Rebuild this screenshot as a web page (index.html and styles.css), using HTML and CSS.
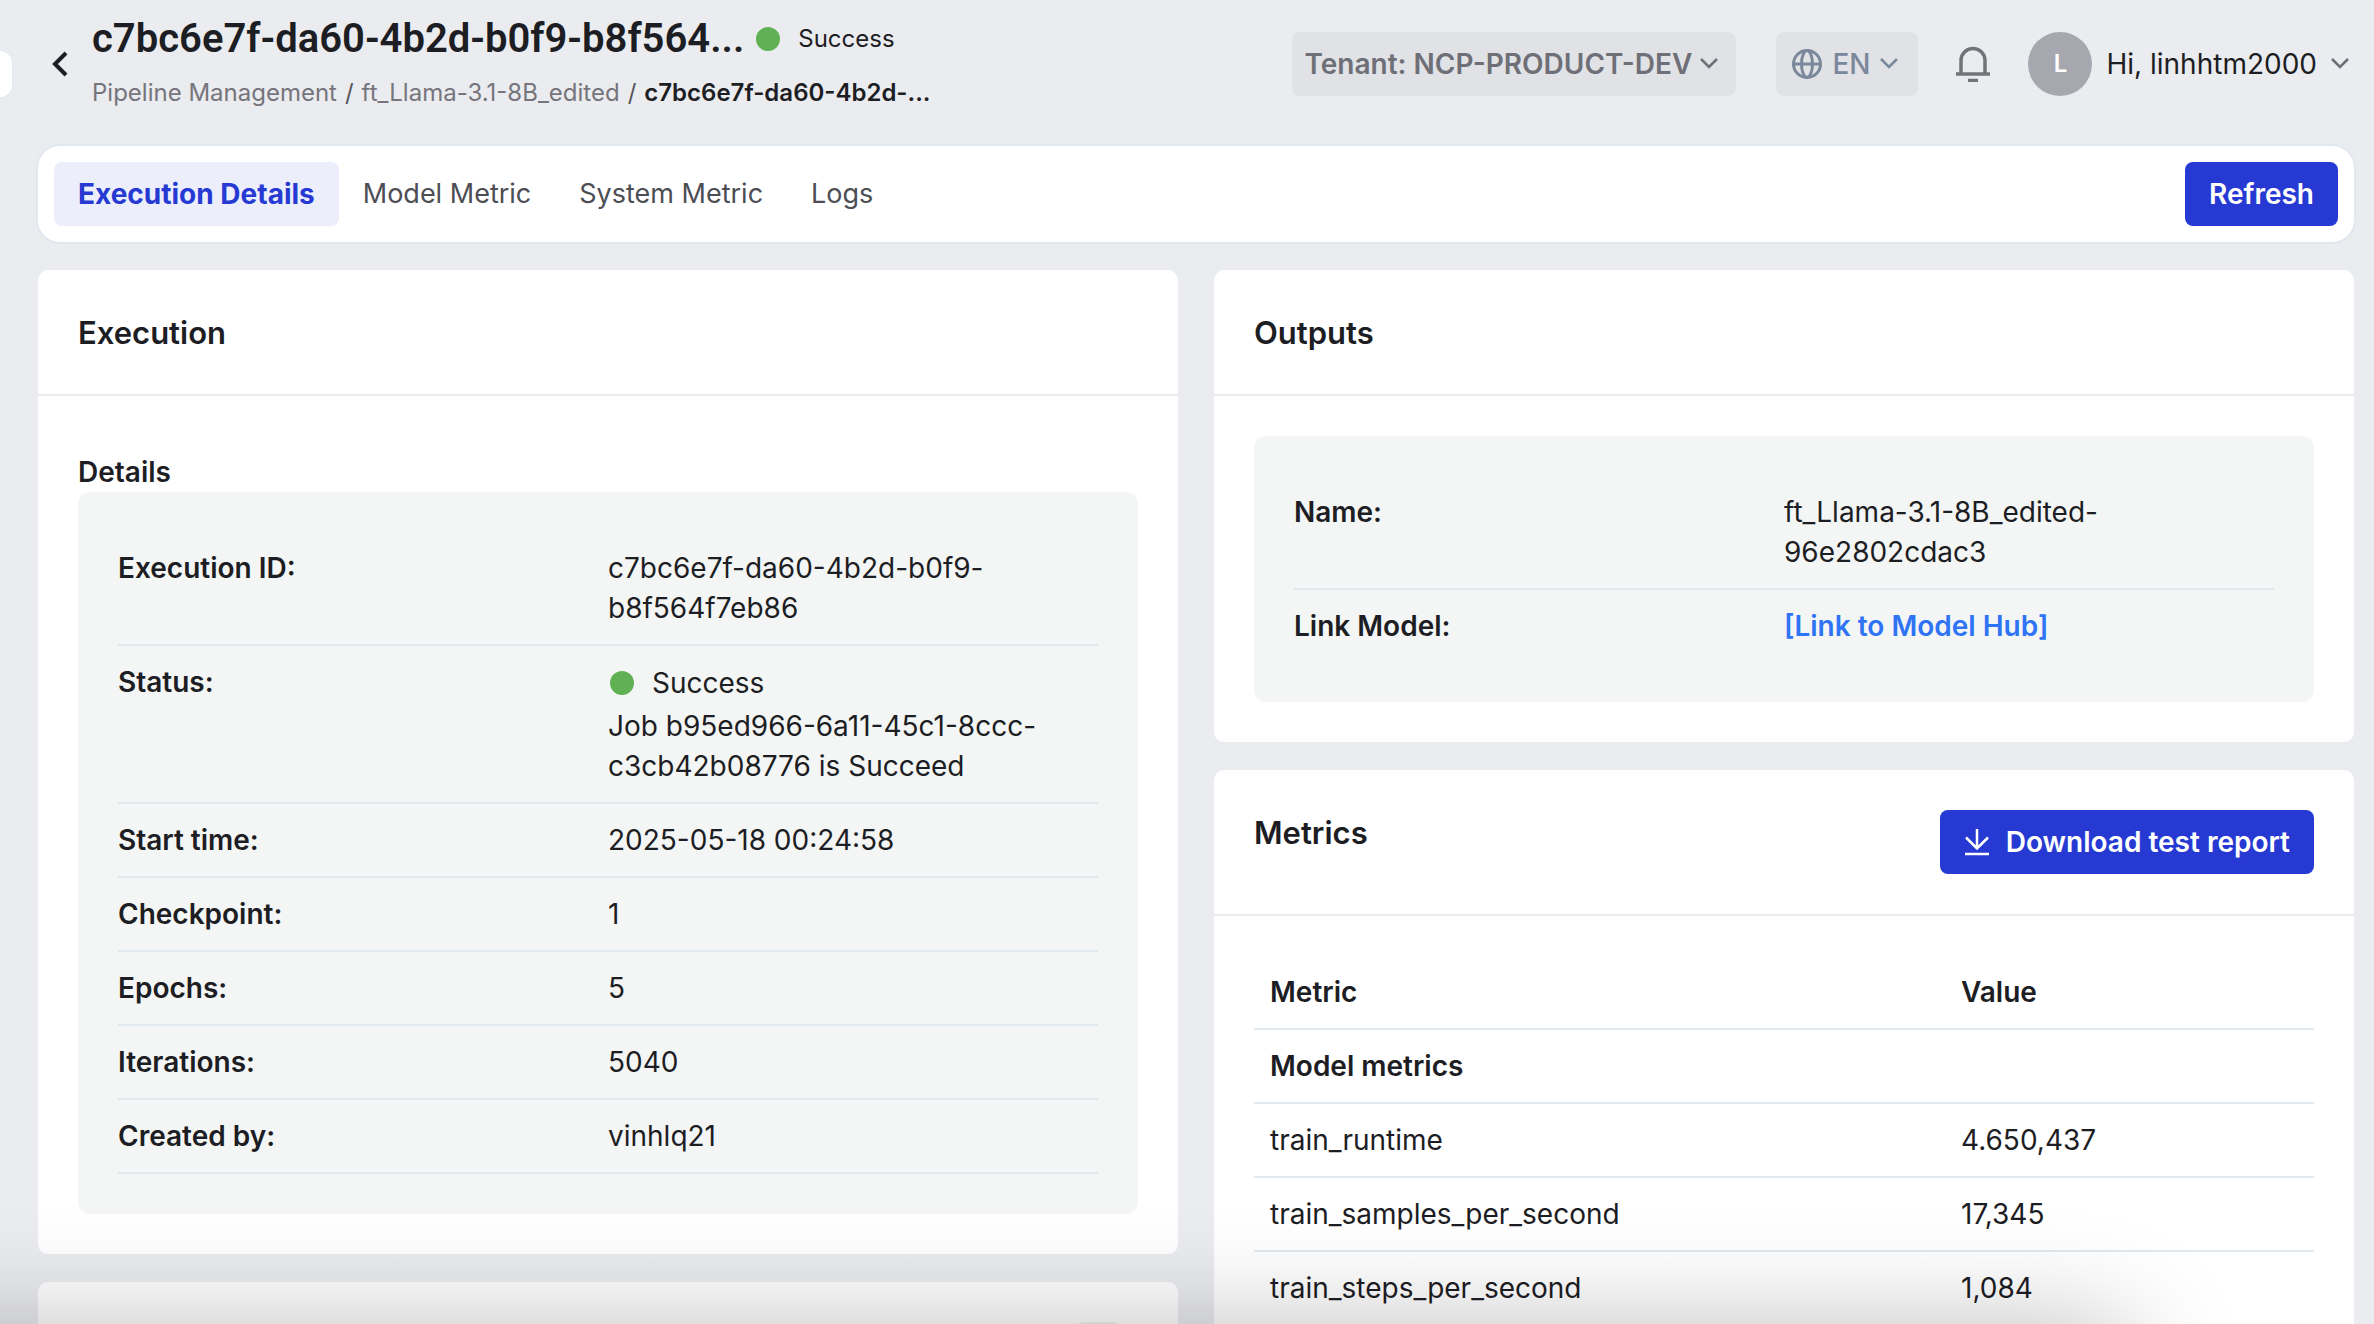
FILE: index.html
```html
<!DOCTYPE html>
<html lang="en">
<head>
<meta charset="utf-8">
<title>Pipeline execution</title>
<link rel="stylesheet" href="styles.css">
</head>
<body>
<header class="topbar">
  <button class="drawer-handle" aria-label="Open menu"></button>
  <button class="back" aria-label="Back">
    <svg width="18" height="28" viewBox="0 0 18 28"><path d="M15 3 4 14l11 11" fill="none" stroke="currentColor" stroke-width="4"/></svg>
  </button>
  <div class="heading">
    <div class="title-row">
      <h1 class="title">c7bc6e7f-da60-4b2d-b0f9-b8f564...</h1>
      <span class="status status-small"><i class="dot"></i>Success</span>
    </div>
    <nav class="crumbs" aria-label="Breadcrumb">
      <a href="#">Pipeline Management</a><span class="sep">/</span><a href="#">ft_Llama-3.1-8B_edited</a><span class="sep">/</span><strong>c7bc6e7f-da60-4b2d-...</strong>
    </nav>
  </div>
  <div class="actions">
    <button class="chip tenant">Tenant: NCP-PRODUCT-DEV
      <svg class="chev" width="18" height="12" viewBox="0 0 18 12"><path d="m1 1 8 8 8-8" fill="none" stroke="currentColor" stroke-width="2.500"/></svg>
    </button>
    <button class="chip lang">
      <svg width="30" height="32" viewBox="0 0 30 32"><g fill="none" stroke="currentColor" stroke-width="3"><circle cx="15" cy="16" r="13.5"/><ellipse cx="15" cy="16" rx="5.5" ry="13.5"/><path d="M1.500 16h27"/></g></svg>
      <span>EN</span>
      <svg class="chev" width="18" height="12" viewBox="0 0 18 12"><path d="m1 1 8 8 8-8" fill="none" stroke="currentColor" stroke-width="2.500"/></svg>
    </button>
    <button class="bell" aria-label="Notifications">
      <svg width="34" height="36" viewBox="0 0 34 36"><path d="M5 28V14.500a12 12 0 0 1 24 0V28M0 28h34M12 34.500h10" fill="none" stroke="currentColor" stroke-width="3.500"/></svg>
    </button>
    <button class="user">
      <span class="avatar">L</span>
      <span>Hi, linhhtm2000</span>
      <svg class="chev" width="18" height="12" viewBox="0 0 18 12"><path d="m1 1 8 8 8-8" fill="none" stroke="currentColor" stroke-width="2.500"/></svg>
    </button>
  </div>
</header>

<main class="content">
  <div class="tabs">
    <button class="tab tab-active">Execution Details</button>
    <button class="tab">Model Metric</button>
    <button class="tab">System Metric</button>
    <button class="tab">Logs</button>
    <button class="primary refresh">Refresh</button>
  </div>

  <div class="columns">
    <div class="column">
      <section class="card">
        <div class="card-head"><h2>Execution</h2></div>
        <div class="card-body">
          <h3 class="subhead">Details</h3>
          <dl class="panel">
            <div class="row"><dt>Execution ID:</dt><dd>c7bc6e7f-da60-4b2d-b0f9-b8f564f7eb86</dd></div>
            <div class="row"><dt>Status:</dt><dd><span class="status status-row"><i class="dot"></i>Success</span>Job b95ed966-6a11-45c1-8ccc-c3cb42b08776 is Succeed</dd></div>
            <div class="row"><dt>Start time:</dt><dd>2025-05-18 00:24:58</dd></div>
            <div class="row"><dt>Checkpoint:</dt><dd>1</dd></div>
            <div class="row"><dt>Epochs:</dt><dd>5</dd></div>
            <div class="row"><dt>Iterations:</dt><dd>5040</dd></div>
            <div class="row"><dt>Created by:</dt><dd>vinhlq21</dd></div>
          </dl>
        </div>
      </section>
      <section class="card card-next">
        <button class="expand" aria-label="Expand"></button>
      </section>
    </div>

    <div class="column">
      <section class="card">
        <div class="card-head"><h2>Outputs</h2></div>
        <div class="card-body">
          <dl class="panel panel-open">
            <div class="row"><dt>Name:</dt><dd>ft_Llama-3.1-8B_edited-96e2802cdac3</dd></div>
            <div class="row"><dt>Link Model:</dt><dd><a class="link" href="#">[Link to Model Hub]</a></dd></div>
          </dl>
        </div>
      </section>
      <section class="card">
        <div class="card-head">
          <h2>Metrics</h2>
          <button class="primary">
            <svg width="26" height="28" viewBox="0 0 26 28"><path d="M13 1v20M2 9.500l11 11 11-11M1 26h24" fill="none" stroke="currentColor" stroke-width="2.500"/></svg>
            Download test report
          </button>
        </div>
        <div class="card-body">
          <table class="metrics">
            <thead><tr><th class="name">Metric</th><th>Value</th></tr></thead>
            <tbody>
              <tr><th colspan="2">Model metrics</th></tr>
              <tr><td>train_runtime</td><td>4.650,437</td></tr>
              <tr><td>train_samples_per_second</td><td>17,345</td></tr>
              <tr><td>train_steps_per_second</td><td>1,084</td></tr>
            </tbody>
          </table>
        </div>
      </section>
    </div>
  </div>
</main>
<div class="bottom-shade"></div>
</body>
</html>
```
FILE: styles.css
```css
* { box-sizing: border-box; }

body {
  margin: 0;
  height: 100vh;
  overflow: hidden;
  background: #ebecf0;
  color: #1d1d24;
  font: 400 28px/40px Inter, "Liberation Sans", sans-serif;
}

h1, h2, h3, dl, dd { margin: 0; }
button { border: 0; padding: 0; background: none; color: inherit; font: inherit; white-space: nowrap; }
svg { display: block; flex: none; }
a { color: inherit; text-decoration: none; }

.topbar {
  display: flex;
  align-items: flex-start;
  padding: 16px 25px 0 0;
  height: 144px;
}

.drawer-handle {
  width: 13px;
  height: 48px;
  margin-top: 34px;
  border: 1px solid #e2e8f0;
  border-left: 0;
  background: #fff;
  border-radius: 0 16px 16px 0;
}

.back { margin: 34px 23px 0 38px; }
.heading { flex: 1; min-width: 0; }
.title-row { display: flex; align-items: center; gap: 12px; height: 46px; }

.title {
  min-width: 652px;
  white-space: nowrap;
  font: 600 40px/48px Roboto, Inter, sans-serif;
}

.status { display: flex; align-items: center; gap: 18px; }
.status-small { font-size: 24px; }
.status-row { height: 44px; padding: 0 0 3px 2px; }
.dot { width: 24px; height: 24px; border-radius: 50%; background: #60b153; }

.crumbs {
  display: flex;
  gap: 8px;
  padding-top: 11px;
  font-size: 24px;
  color: #75757b;
}
.crumbs .sep { color: #55555c; }
.crumbs strong { font-weight: 600; color: #1d1d24; }

.actions { display: flex; align-items: center; padding-top: 16px; }

.chip {
  display: flex;
  align-items: center;
  gap: 8px;
  height: 64px;
  border-radius: 8px;
  background: #e1e2e6;
}
.tenant { padding: 0 18px 0 12px; margin-right: 40px; font-weight: 600; color: #6e6f77; }
.lang { gap: 10px; padding: 0 20px 0 16px; margin-right: 38px; color: #7b879b; font-weight: 500; }
.bell { margin-right: 38px; color: #737479; }
.user { display: flex; align-items: center; gap: 14px; }
.user .chev { color: #6e6f77; }

.avatar {
  width: 64px;
  height: 64px;
  border-radius: 50%;
  background: #a7a7af;
  color: #fff;
  font-size: 24px;
  font-weight: 600;
  line-height: 64px;
}

.content { padding: 0 20px 0 38px; }

.tabs {
  display: flex;
  align-items: center;
  height: 100px;
  margin: 0 -2px;
  padding: 0 16px;
  border: 2px solid #e2e8f0;
  border-radius: 24px;
  background: #fff;
}
.tab { height: 64px; padding: 0 24px; border-radius: 8px; color: #4d4d54; font-size: 27px; }
.tab-active { background: #eceefb; color: #263ad3; font-size: 28px; font-weight: 700; }

.primary {
  display: flex;
  align-items: center;
  gap: 16px;
  height: 64px;
  padding: 0 24px;
  border-radius: 8px;
  background: #263ad3;
  color: #fff;
  font-weight: 600;
}
.refresh { margin-left: auto; }

.columns { display: grid; grid-template-columns: 1fr 1fr; gap: 36px; padding-top: 26px; }
.column { display: flex; flex-direction: column; gap: 28px; }
.card { border-radius: 10px; background: #fff; }

.card-head {
  display: flex;
  justify-content: space-between;
  align-items: flex-start;
  padding: 40px;
  border-bottom: 2px solid #ececee;
}
.card-head h2 { padding-top: 2px; font-size: 31px; line-height: 42px; font-weight: 600; }
.card-body { padding: 40px; }
.card-next { display: flex; justify-content: flex-end; padding: 40px 54px; }
.expand { width: 52px; height: 52px; border-radius: 12px; background: #eeeff0; }

.subhead { padding-top: 16px; font-size: 28px; font-weight: 600; }
.panel { padding: 40px; border-radius: 12px; background: #f4f6f5; }

.row {
  display: grid;
  grid-template-columns: 1fr 1fr;
  padding: 16px 0;
  border-bottom: 2px solid #e2e8f0;
}
.row dt { font-weight: 600; }
.panel-open .row:last-child { border-bottom: 0; }
.link { color: #2f74f5; font-weight: 600; }

.metrics { width: 100%; border-collapse: separate; border-spacing: 0; text-align: left; }
.metrics .name { width: 691px; }
.metrics th, .metrics td { padding: 16px; border-bottom: 2px solid #e2e8f0; }
.metrics th { font-weight: 600; }

/* Soft shadow rising from below the window */
.bottom-shade {
  position: fixed;
  left: -200px;
  right: 240px;
  bottom: -200px;
  height: 200px;
  border-radius: 40px;
  box-shadow: 0 0 110px rgba(0, 0, 0, 0.25);
  pointer-events: none;
}
```
